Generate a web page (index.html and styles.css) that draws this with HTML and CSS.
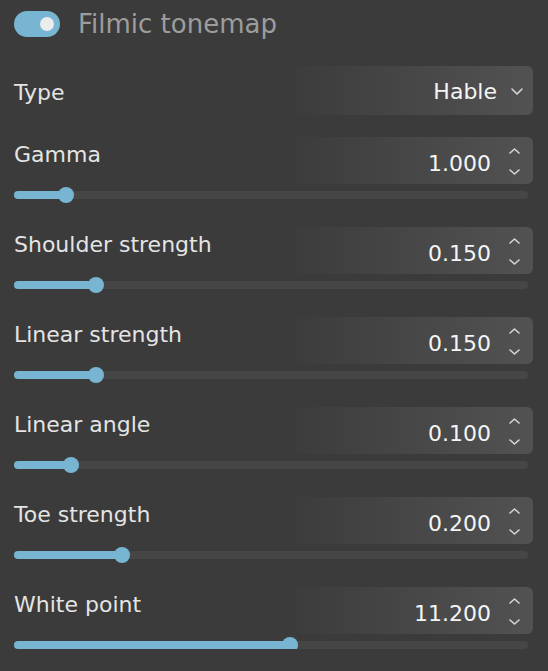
FILE: index.html
```html
<!DOCTYPE html>
<html lang="en">
<head>
<meta charset="utf-8">
<title>Filmic tonemap</title>
<link rel="stylesheet" href="styles.css">
</head>
<body>
<div class="panel">
  <div class="header">
    <div class="toggle"><div class="knob"></div></div>
    <div class="title">Filmic tonemap</div>
  </div>

  <div class="type-row">
    <div class="label">Type</div>
    <div class="field select">
      <span class="value">Hable</span>
      <svg class="chev-down" width="12" height="7" viewBox="0 0 12 7"><polyline points="1,1 6,6 11,1" fill="none" stroke="#d6d6d6" stroke-width="1.6" stroke-linecap="round" stroke-linejoin="round"/></svg>
    </div>
  </div>

  <div class="param">
    <div class="param-head">
      <div class="label">Gamma</div>
      <div class="field number">
        <span class="value">1.000</span>
        <div class="stepper">
          <svg width="11" height="6" viewBox="0 0 11 6"><polyline points="1,5 5.5,1 10,5" fill="none" stroke="#d6d6d6" stroke-width="1.6" stroke-linecap="round" stroke-linejoin="round"/></svg>
          <svg width="11" height="6" viewBox="0 0 11 6"><polyline points="1,1 5.5,5 10,1" fill="none" stroke="#d6d6d6" stroke-width="1.6" stroke-linecap="round" stroke-linejoin="round"/></svg>
        </div>
      </div>
    </div>
    <div class="slider"><div class="fill" style="width:52px"><div class="thumb"></div></div></div>
  </div>

  <div class="param">
    <div class="param-head">
      <div class="label">Shoulder strength</div>
      <div class="field number">
        <span class="value">0.150</span>
        <div class="stepper">
          <svg width="11" height="6" viewBox="0 0 11 6"><polyline points="1,5 5.5,1 10,5" fill="none" stroke="#d6d6d6" stroke-width="1.6" stroke-linecap="round" stroke-linejoin="round"/></svg>
          <svg width="11" height="6" viewBox="0 0 11 6"><polyline points="1,1 5.5,5 10,1" fill="none" stroke="#d6d6d6" stroke-width="1.6" stroke-linecap="round" stroke-linejoin="round"/></svg>
        </div>
      </div>
    </div>
    <div class="slider"><div class="fill" style="width:82px"><div class="thumb"></div></div></div>
  </div>

  <div class="param">
    <div class="param-head">
      <div class="label">Linear strength</div>
      <div class="field number">
        <span class="value">0.150</span>
        <div class="stepper">
          <svg width="11" height="6" viewBox="0 0 11 6"><polyline points="1,5 5.5,1 10,5" fill="none" stroke="#d6d6d6" stroke-width="1.6" stroke-linecap="round" stroke-linejoin="round"/></svg>
          <svg width="11" height="6" viewBox="0 0 11 6"><polyline points="1,1 5.5,5 10,1" fill="none" stroke="#d6d6d6" stroke-width="1.6" stroke-linecap="round" stroke-linejoin="round"/></svg>
        </div>
      </div>
    </div>
    <div class="slider"><div class="fill" style="width:82px"><div class="thumb"></div></div></div>
  </div>

  <div class="param">
    <div class="param-head">
      <div class="label">Linear angle</div>
      <div class="field number">
        <span class="value">0.100</span>
        <div class="stepper">
          <svg width="11" height="6" viewBox="0 0 11 6"><polyline points="1,5 5.5,1 10,5" fill="none" stroke="#d6d6d6" stroke-width="1.6" stroke-linecap="round" stroke-linejoin="round"/></svg>
          <svg width="11" height="6" viewBox="0 0 11 6"><polyline points="1,1 5.5,5 10,1" fill="none" stroke="#d6d6d6" stroke-width="1.6" stroke-linecap="round" stroke-linejoin="round"/></svg>
        </div>
      </div>
    </div>
    <div class="slider"><div class="fill" style="width:57px"><div class="thumb"></div></div></div>
  </div>

  <div class="param">
    <div class="param-head">
      <div class="label">Toe strength</div>
      <div class="field number">
        <span class="value">0.200</span>
        <div class="stepper">
          <svg width="11" height="6" viewBox="0 0 11 6"><polyline points="1,5 5.5,1 10,5" fill="none" stroke="#d6d6d6" stroke-width="1.6" stroke-linecap="round" stroke-linejoin="round"/></svg>
          <svg width="11" height="6" viewBox="0 0 11 6"><polyline points="1,1 5.5,5 10,1" fill="none" stroke="#d6d6d6" stroke-width="1.6" stroke-linecap="round" stroke-linejoin="round"/></svg>
        </div>
      </div>
    </div>
    <div class="slider"><div class="fill" style="width:108px"><div class="thumb"></div></div></div>
  </div>

  <div class="param">
    <div class="param-head">
      <div class="label">White point</div>
      <div class="field number">
        <span class="value">11.200</span>
        <div class="stepper">
          <svg width="11" height="6" viewBox="0 0 11 6"><polyline points="1,5 5.5,1 10,5" fill="none" stroke="#d6d6d6" stroke-width="1.6" stroke-linecap="round" stroke-linejoin="round"/></svg>
          <svg width="11" height="6" viewBox="0 0 11 6"><polyline points="1,1 5.5,5 10,1" fill="none" stroke="#d6d6d6" stroke-width="1.6" stroke-linecap="round" stroke-linejoin="round"/></svg>
        </div>
      </div>
    </div>
    <div class="slider"><div class="fill" style="width:276px"><div class="thumb"></div></div></div>
  </div>
</div>
</body>
</html>
```

FILE: styles.css
```css
html, body {
  margin: 0;
  padding: 0;
  background: #3b3b3b;
}

body {
  font-family: "DejaVu Sans", Verdana, sans-serif;
  color: #e4e4e4;
}

.panel {
  padding: 11px 15px 0 14px;
}

.header {
  display: flex;
  align-items: center;
  height: 26px;
}

.toggle {
  width: 46px;
  height: 26px;
  border-radius: 13px;
  background: #78b5d2;
  position: relative;
  flex: none;
}

.knob {
  position: absolute;
  left: 26px;
  top: 6px;
  width: 14px;
  height: 14px;
  border-radius: 50%;
  background: #ececec;
}

.title {
  margin-left: 18px;
  font-size: 26px;
  color: #9d9d9d;
  line-height: 26px;
}

.type-row {
  margin-top: 29px;
  display: flex;
  justify-content: space-between;
  align-items: center;
}

.label {
  font-size: 22px;
  line-height: 26px;
  color: #e4e4e4;
}

.type-row .label {
  padding-top: 5px;
}

.field {
  width: 250px;
  border-radius: 6px;
  background: linear-gradient(to right, rgba(82, 82, 82, 0) 0%, #525252 100%);
  display: flex;
  align-items: center;
  justify-content: flex-end;
  box-sizing: border-box;
}

.select {
  height: 49px;
  padding-right: 10px;
}

.select .value {
  margin-right: 14px;
  padding-top: 3px;
}

.chev-down {
  display: block;
  margin-top: 1px;
}

.value {
  font-size: 22px;
  line-height: 26px;
  color: #f4f4f4;
}

.param {
  margin-top: 22px;
}

.param + .param {
  margin-top: 28px;
}

.param-head {
  display: flex;
  justify-content: space-between;
  align-items: flex-start;
}

.param-head .label {
  margin-top: 5px;
}

.number {
  height: 47px;
  padding-right: 13px;
}

.number .value {
  margin-right: 18px;
  padding-top: 6px;
}

.stepper {
  display: flex;
  flex-direction: column;
  gap: 15px;
  padding-top: 1px;
}

.stepper svg {
  display: block;
}

.slider {
  margin-top: 7px;
  margin-right: 5px;
  height: 8px;
  border-radius: 4px;
  background: #464646;
}

.fill {
  height: 8px;
  border-radius: 4px;
  background: #78b5d2;
  position: relative;
}

.thumb {
  position: absolute;
  right: -8px;
  top: -4px;
  width: 16px;
  height: 16px;
  border-radius: 50%;
  background: #78b5d2;
}
```
